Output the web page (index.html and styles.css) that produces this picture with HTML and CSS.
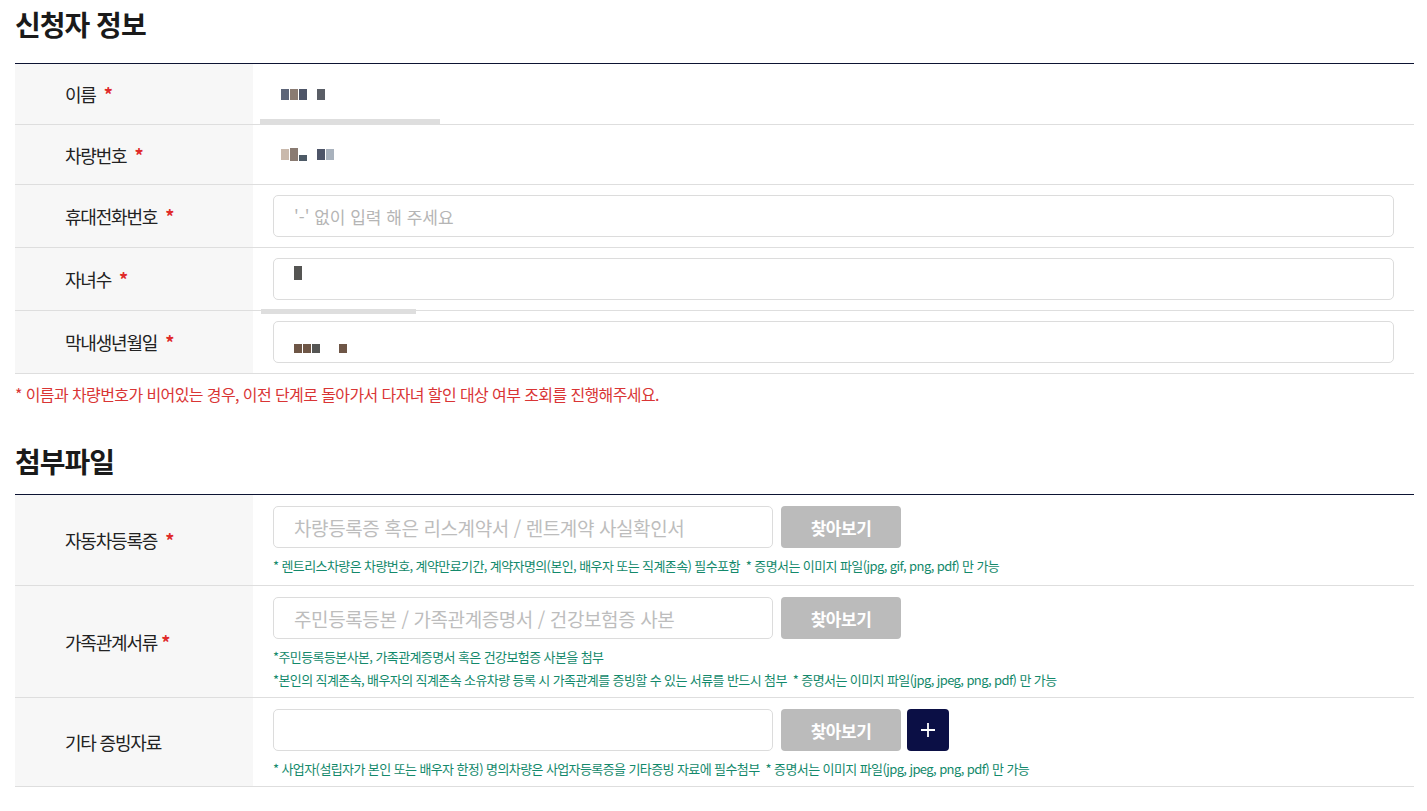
FILE: index.html
```html
<!DOCTYPE html>
<html lang="ko">
<head>
	<meta charset="UTF-8">
	<meta name="viewport" content="width=device-width, initial-scale=1.0">
	<title>신청자 정보</title>
	<link rel="stylesheet" href="styles.css">
</head>
<body>
	<div class="wrap">
		<h2 class="sec-title">신청자 정보</h2>
		<div class="form-table">
			<div class="row">
				<div class="label">이름 <span class="req">*</span></div>
				<div class="field">
					<div class="blur">
						<i class="px c1"></i><i class="px c2"></i><i class="px c3"></i><i class="px c0"></i><i class="px c4"></i>
					</div>
					<div class="strip s-name"></div>
				</div>
			</div>
			<div class="row">
				<div class="label">차량번호 <span class="req">*</span></div>
				<div class="field">
					<div class="blur">
						<i class="px c5"></i><i class="px c2 tall"></i><i class="px c6 low"></i><i class="px c0"></i><i class="px c3"></i><i class="px c7"></i>
					</div>
				</div>
			</div>
			<div class="row">
				<div class="label">휴대전화번호 <span class="req">*</span></div>
				<div class="field">
					<input class="text-input" type="text" placeholder="'-' 없이 입력 해 주세요">
				</div>
			</div>
			<div class="row">
				<div class="label">자녀수 <span class="req">*</span></div>
				<div class="field">
					<div class="text-input box">
						<i class="px c8 one"></i>
					</div>
					<div class="strip s-kids"></div>
				</div>
			</div>
			<div class="row">
				<div class="label">막내생년월일 <span class="req">*</span></div>
				<div class="field">
					<div class="text-input box">
						<i class="px c9"></i><i class="px c9"></i><i class="px c8"></i><i class="px c0"></i><i class="px c0"></i><i class="px c9"></i>
					</div>
				</div>
			</div>
		</div>
		<p class="warn">* 이름과 차량번호가 비어있는 경우, 이전 단계로 돌아가서 다자녀 할인 대상 여부 조회를 진행해주세요.</p>

		<h2 class="sec-title sec-title--files">첨부파일</h2>
		<div class="form-table">
			<div class="row file-row">
				<div class="label">자동차등록증 <span class="req">*</span></div>
				<div class="field">
					<div class="file-line">
						<input class="file-input" type="text" placeholder="차량등록증 혹은 리스계약서 / 렌트계약 사실확인서">
						<button class="btn-find" type="button">찾아보기</button>
					</div>
					<p class="note">* 렌트리스차량은 차량번호, 계약만료기간, 계약자명의(본인, 배우자 또는 직계존속) 필수포함 &nbsp;* 증명서는 이미지 파일(jpg, gif, png, pdf) 만 가능</p>
				</div>
			</div>
			<div class="row file-row">
				<div class="label">가족관계서류 <span class="req tight">*</span></div>
				<div class="field">
					<div class="file-line">
						<input class="file-input" type="text" placeholder="주민등록등본 / 가족관계증명서 / 건강보험증 사본">
						<button class="btn-find" type="button">찾아보기</button>
					</div>
					<p class="note">*주민등록등본사본, 가족관계증명서 혹은 건강보험증 사본을 첨부</p>
					<p class="note">*본인의 직계존속, 배우자의 직계존속 소유차량 등록 시 가족관계를 증빙할 수 있는 서류를 반드시 첨부 &nbsp;* 증명서는 이미지 파일(jpg, jpeg, png, pdf) 만 가능</p>
				</div>
			</div>
			<div class="row file-row">
				<div class="label">기타 증빙자료</div>
				<div class="field">
					<div class="file-line">
						<input class="file-input" type="text">
						<button class="btn-find" type="button">찾아보기</button>
						<button class="btn-add" type="button">
							<svg width="16" height="16" viewBox="0 0 16 16"><path d="M8 1v14M1 8h14" stroke="#fff" stroke-width="1.8"/></svg>
						</button>
					</div>
					<p class="note">* 사업자(설립자가 본인 또는 배우자 한정) 명의차량은 사업자등록증을 기타증빙 자료에 필수첨부 &nbsp;* 증명서는 이미지 파일(jpg, jpeg, png, pdf) 만 가능</p>
				</div>
			</div>
		</div>
	</div>
</body>
</html>
```

FILE: styles.css
```css
*,
*::before,
*::after {
	padding: 0;
	margin: 0;
	box-sizing: border-box;
}
body {
	font-family: "Noto Sans CJK KR", "Noto Sans", sans-serif;
	color: #222;
	background: #fff;
}

.wrap {
	padding: 0 13px 0 15px;
}

.sec-title {
	font-size: 28px;
	font-weight: 700;
	line-height: 40px;
	letter-spacing: -1px;
	color: #1a1a1a;
	padding-top: 4px;
	margin-bottom: 19px;
}
.sec-title--files {
	margin-bottom: 13px;
}

.form-table {
	border-top: 1px solid #0d1433;
}

.row {
	display: flex;
	min-height: 61px;
	border-bottom: 1px solid #dedede;
}
.row + .row {
	min-height: 63px;
}
.row:first-child + .row {
	min-height: 60px;
}

.label {
	width: 238px;
	flex-shrink: 0;
	background: #f7f7f7;
	padding-left: 50px;
	display: flex;
	align-items: center;
	font-size: 18px;
	letter-spacing: -1.2px;
	color: #222;
}
.req {
	color: #e02a2a;
	margin-left: 8px;
	font-weight: 700;
}
.req.tight {
	margin-left: 4px;
}

.field {
	flex: 1;
	padding: 10px 20px 10px 20px;
	display: flex;
	flex-direction: column;
	justify-content: center;
	position: relative;
}

.text-input {
	width: 100%;
	height: 42px;
	border: 1px solid #dcdcdc;
	border-radius: 5px;
	padding: 0 20px;
	font-family: inherit;
	font-size: 17px;
	color: #333;
	outline: none;
}
.text-input::placeholder {
	color: #b5b5b5;
}
.box {
	display: flex;
	align-items: center;
}

/* pixelated, masked values */
.blur {
	display: flex;
	align-items: center;
	padding-left: 8px;
	height: 20px;
}
.px {
	display: inline-block;
	width: 8px;
	height: 11px;
	margin-right: 1px;
}
.px.tall { height: 13px; }
.px.low { height: 6px; margin-top: 6px; }
.px.one { width: 8px; height: 14px; margin-top: -16px; }
.c0 { background: transparent; }
.c1 { background: #5d6578; }
.c2 { background: #8a7b72; }
.c3 { background: #4e5568; }
.c4 { background: #5a5e66; }
.c5 { background: #c9b9ac; }
.c6 { background: #4d5a66; }
.c7 { background: #a9b2bd; }
.c8 { background: #555553; }
.c9 { background: #6e5646; }
.box .px { margin-top: 12px; height: 9px; }
.box .px.one { margin-top: -12px; height: 14px; }

.strip {
	position: absolute;
	height: 5px;
	background: #dedede;
}
.s-name {
	left: 7px;
	bottom: 0;
	width: 180px;
}
.s-kids {
	left: 8px;
	bottom: -4px;
	width: 155px;
}

.warn {
	color: #d93535;
	font-size: 16px;
	letter-spacing: -0.6px;
	margin: 8px 0 31px;
}

.file-row .field {
	padding: 11px 20px 6px 20px;
	justify-content: flex-start;
}
.file-row {
	min-height: 91px;
}
.file-line {
	display: flex;
	gap: 8px;
	margin-bottom: 6px;
}
.file-input {
	width: 500px;
	height: 42px;
	border: 1px solid #dcdcdc;
	border-radius: 5px;
	padding: 0 20px;
	font-family: inherit;
	font-size: 19px;
	letter-spacing: -0.4px;
	outline: none;
}
.file-input::placeholder {
	color: #bdbdbd;
}
.btn-find {
	width: 120px;
	height: 42px;
	border: none;
	border-radius: 4px;
	background: #bbbbbb;
	color: #fff;
	font-family: inherit;
	font-size: 17px;
	font-weight: 700;
	letter-spacing: -0.5px;
}
.btn-add {
	width: 42px;
	height: 42px;
	border: none;
	border-radius: 4px;
	background: #0b0f45;
	display: flex;
	align-items: center;
	justify-content: center;
	margin-left: -2px;
}

.note {
	font-size: 13px;
	color: #13896b;
	letter-spacing: -0.6px;
	line-height: 23px;
}
```
